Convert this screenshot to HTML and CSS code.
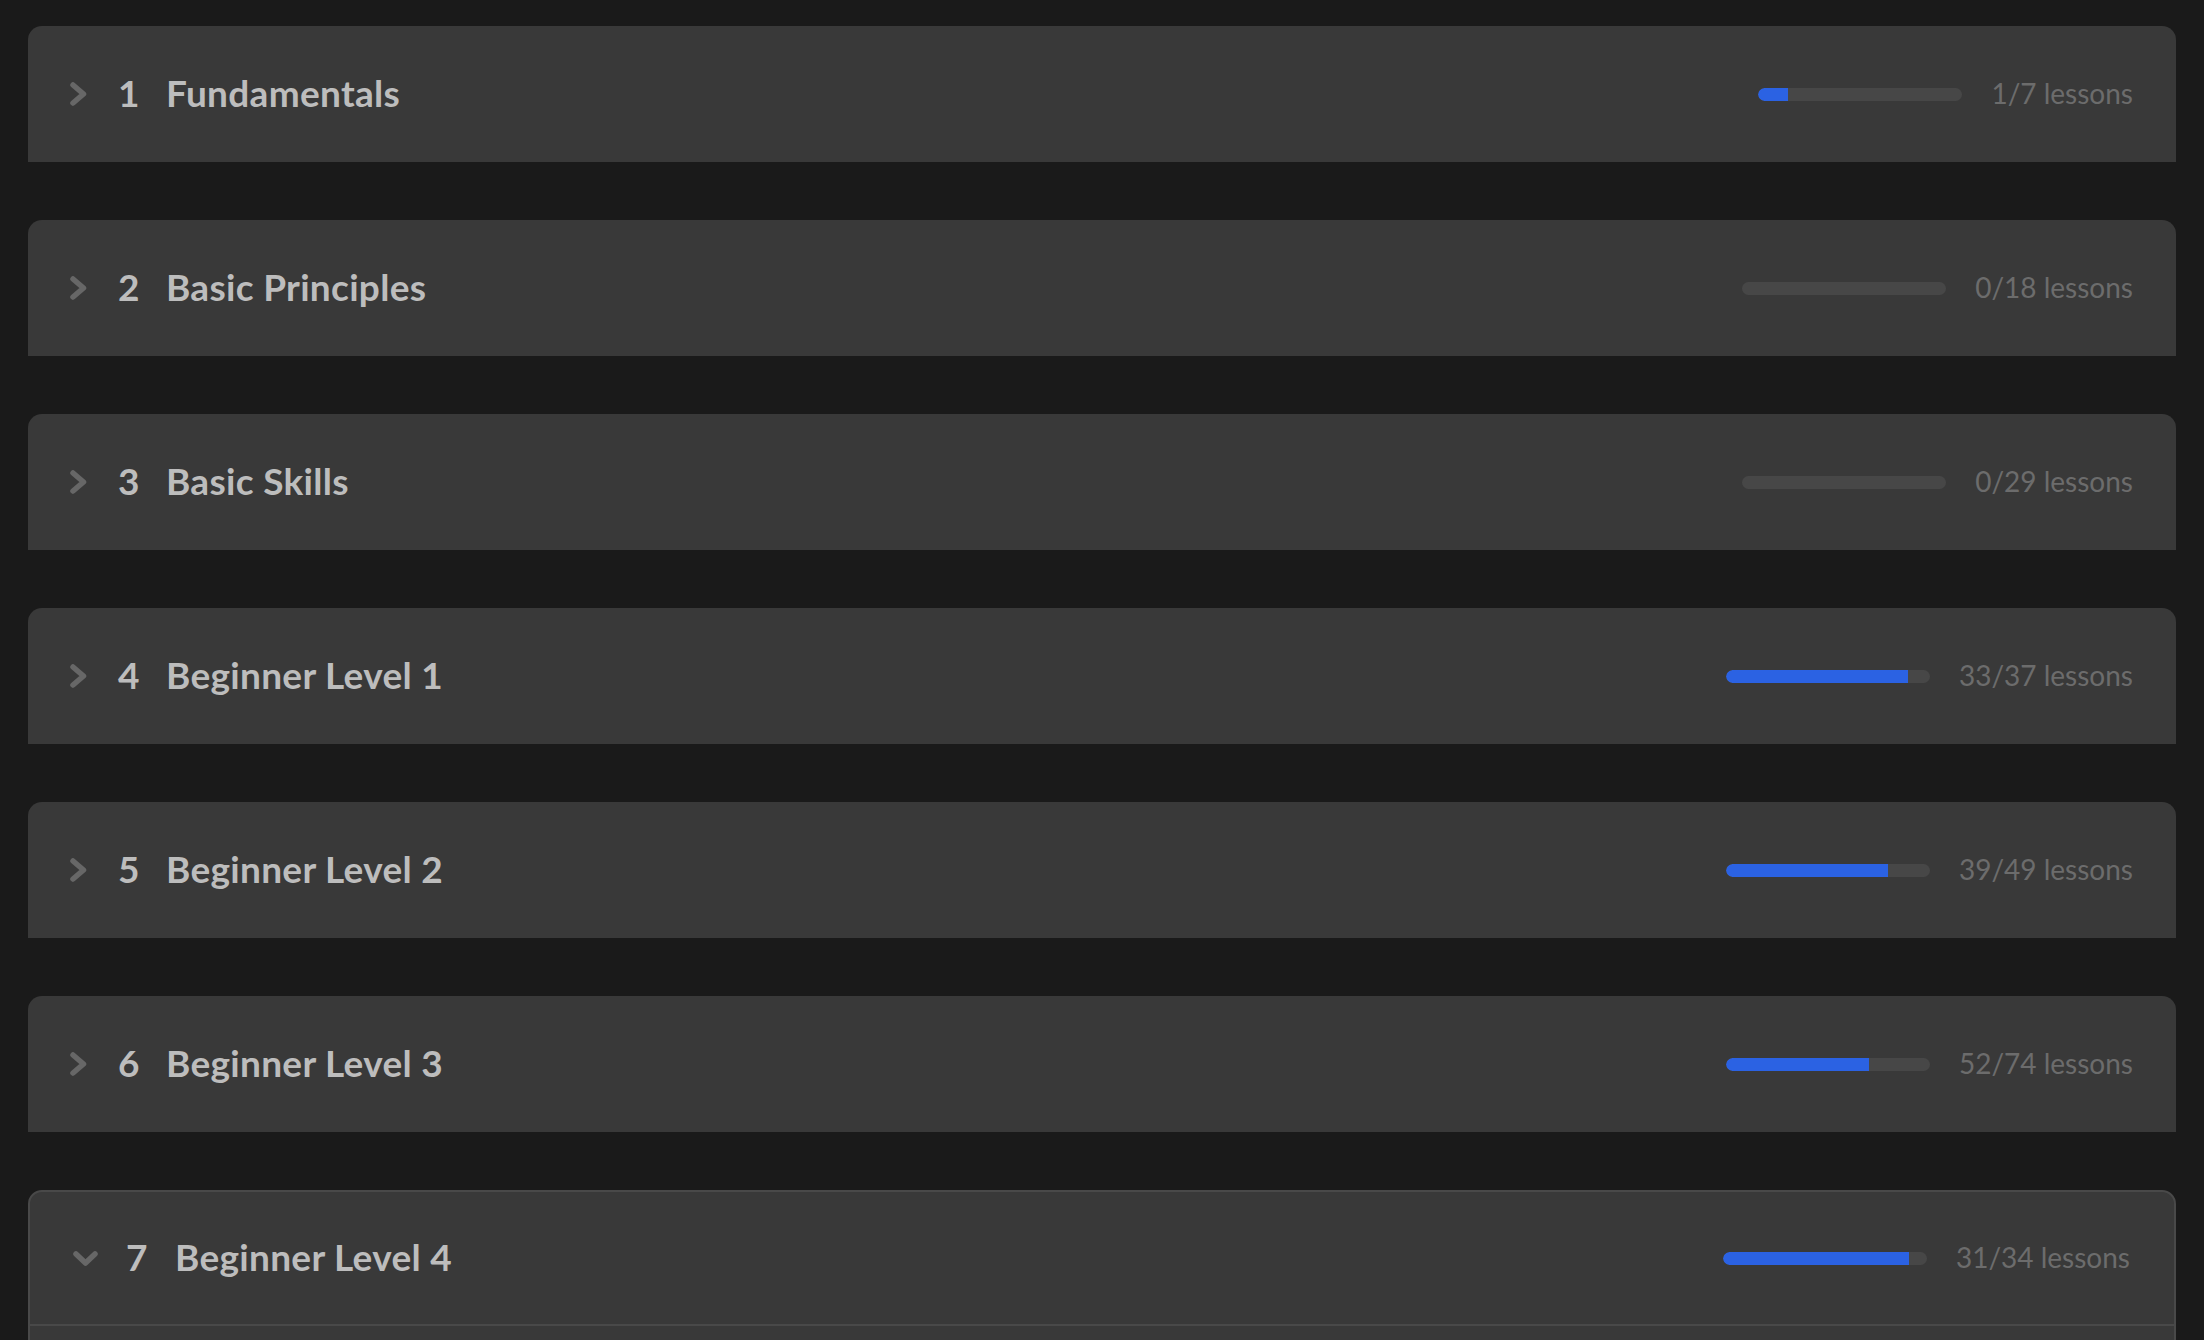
FILE: index.html
```html
<!DOCTYPE html>
<html lang="en">
<head>
<meta charset="utf-8">
<title>Course Modules</title>
<link rel="stylesheet" href="styles.css">
</head>
<body>
<main class="modules">
  <section class="module">
    <div class="module-head">
      <svg class="chev chev-right" width="17" height="24" viewBox="0 0 17 24"><polyline points="3,3 13.5,12 3,21"/></svg>
      <span class="num">1</span>
      <span class="title">Fundamentals</span>
      <div class="progress">
        <div class="track"><div class="fill" style="width:14.29%"></div></div>
        <span class="count">1/7 lessons</span>
      </div>
    </div>
  </section>
  <section class="module">
    <div class="module-head">
      <svg class="chev chev-right" width="17" height="24" viewBox="0 0 17 24"><polyline points="3,3 13.5,12 3,21"/></svg>
      <span class="num">2</span>
      <span class="title">Basic Principles</span>
      <div class="progress">
        <div class="track"><div class="fill" style="width:0%"></div></div>
        <span class="count">0/18 lessons</span>
      </div>
    </div>
  </section>
  <section class="module">
    <div class="module-head">
      <svg class="chev chev-right" width="17" height="24" viewBox="0 0 17 24"><polyline points="3,3 13.5,12 3,21"/></svg>
      <span class="num">3</span>
      <span class="title">Basic Skills</span>
      <div class="progress">
        <div class="track"><div class="fill" style="width:0%"></div></div>
        <span class="count">0/29 lessons</span>
      </div>
    </div>
  </section>
  <section class="module">
    <div class="module-head">
      <svg class="chev chev-right" width="17" height="24" viewBox="0 0 17 24"><polyline points="3,3 13.5,12 3,21"/></svg>
      <span class="num">4</span>
      <span class="title">Beginner Level 1</span>
      <div class="progress">
        <div class="track"><div class="fill" style="width:89.19%"></div></div>
        <span class="count">33/37 lessons</span>
      </div>
    </div>
  </section>
  <section class="module">
    <div class="module-head">
      <svg class="chev chev-right" width="17" height="24" viewBox="0 0 17 24"><polyline points="3,3 13.5,12 3,21"/></svg>
      <span class="num">5</span>
      <span class="title">Beginner Level 2</span>
      <div class="progress">
        <div class="track"><div class="fill" style="width:79.59%"></div></div>
        <span class="count">39/49 lessons</span>
      </div>
    </div>
  </section>
  <section class="module">
    <div class="module-head">
      <svg class="chev chev-right" width="17" height="24" viewBox="0 0 17 24"><polyline points="3,3 13.5,12 3,21"/></svg>
      <span class="num">6</span>
      <span class="title">Beginner Level 3</span>
      <div class="progress">
        <div class="track"><div class="fill" style="width:70.27%"></div></div>
        <span class="count">52/74 lessons</span>
      </div>
    </div>
  </section>
  <section class="module module-open">
    <div class="module-head">
      <svg class="chev chev-down" width="25" height="15" viewBox="0 0 25 15"><polyline points="3,3 12.5,12 22,3"/></svg>
      <span class="num">7</span>
      <span class="title">Beginner Level 4</span>
      <div class="progress">
        <div class="track"><div class="fill" style="width:91.18%"></div></div>
        <span class="count">31/34 lessons</span>
      </div>
    </div>
    <div class="module-body"></div>
  </section>
</main>
</body>
</html>
```

FILE: styles.css
```css
html, body {
  margin: 0;
  padding: 0;
  background: #1a1a1a;
  overflow: hidden;
}

body {
  font-family: Lato, "Noto Sans", sans-serif;
}

.modules {
  padding: 26px 28px 0 28px;
  display: flex;
  flex-direction: column;
  gap: 58px;
}

.module {
  background: #393939;
  border-radius: 14px 14px 0 0;
}

.module-head {
  height: 136px;
  display: flex;
  align-items: center;
  padding: 0 43px 0 42px;
  box-sizing: border-box;
}

.chev {
  flex: none;
  fill: none;
  stroke: #676767;
  stroke-width: 5.5;
  stroke-linecap: round;
  stroke-linejoin: round;
}

.chev-right {
  margin-right: 31px;
}

.num {
  flex: none;
  width: 48px;
  font-size: 37px;
  font-weight: 700;
  color: #bdbdbd;
  padding-bottom: 3px;
}

.title {
  font-size: 37px;
  font-weight: 700;
  letter-spacing: 0.3px;
  color: #bdbdbd;
  flex: 1;
  padding-bottom: 3px;
}

.progress {
  display: flex;
  align-items: center;
  gap: 29px;
}

.track {
  width: 204px;
  height: 13px;
  border-radius: 7px;
  background: #474747;
  overflow: hidden;
}

.fill {
  height: 100%;
  background: #2b62e3;
  border-radius: 7px 0 0 7px;
}

.count {
  font-size: 28px;
  color: #6c6c6c;
  padding-bottom: 2px;
}

.module-open {
  border: 2px solid #494949;
}

.module-open .module-head {
  height: 132px;
  padding-left: 43px;
  padding-right: 44px;
  border-bottom: 2px solid #494949;
  box-sizing: content-box;
}

.chev-down {
  margin-right: 28px;
}

.module-open .num {
  width: 49px;
}

.module-body {
  height: 300px;
}
```
